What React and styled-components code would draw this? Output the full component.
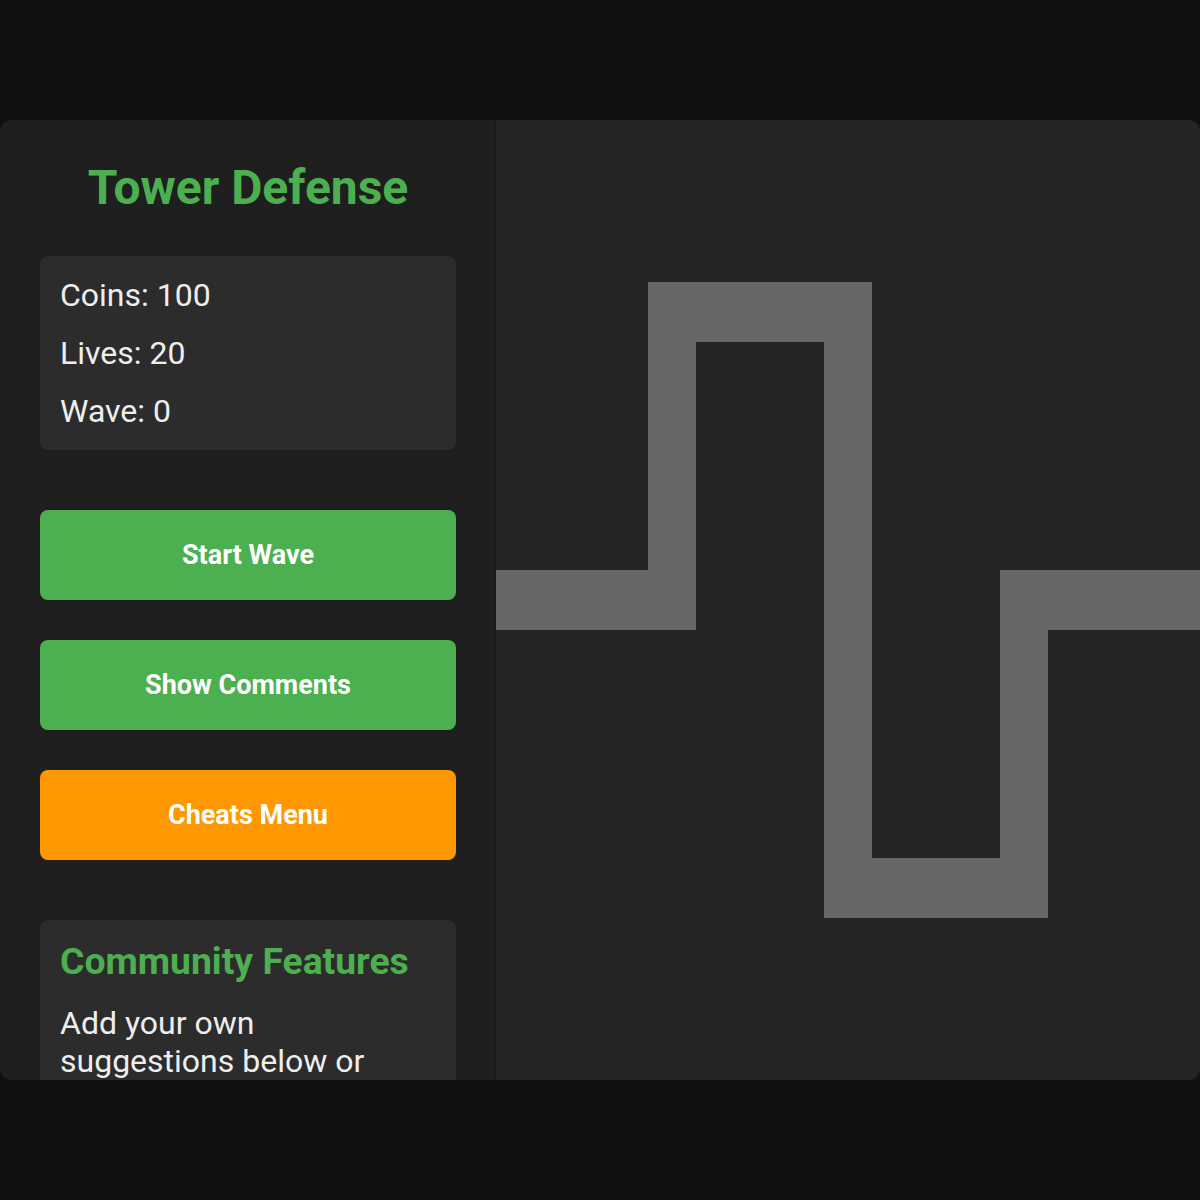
import React, { useState } from "react";
import styled, { createGlobalStyle } from "styled-components";

const GlobalStyle = createGlobalStyle`
  html, body {
    margin: 0;
    padding: 0;
    background: #111111;
    font-family: Roboto, "Noto Sans", "Liberation Sans", sans-serif;
  }
  * {
    box-sizing: border-box;
  }
`;

// enemy route, in board pixels: each segment is a rect [x, y, w, h]
const PATH_SEGMENTS = [
  [0, 450, 200, 60],
  [152, 162, 48, 348],
  [152, 162, 224, 60],
  [328, 162, 48, 636],
  [328, 738, 224, 60],
  [504, 450, 48, 348],
  [504, 450, 200, 60],
];

const App = () => {
  const [stats] = useState({ coins: 100, lives: 20, wave: 0 });

  return (
    <>
      <GlobalStyle />
      <Page>
        <Game>
          <Sidebar>
            <Title>Tower Defense</Title>
            <StatsBox>
              <Stat>Coins: {stats.coins}</Stat>
              <Stat>Lives: {stats.lives}</Stat>
              <Stat>Wave: {stats.wave}</Stat>
            </StatsBox>
            <Controls>
              <ActionButton>Start Wave</ActionButton>
              <ActionButton>Show Comments</ActionButton>
              <ActionButton $variant="warning">Cheats Menu</ActionButton>
            </Controls>
            <Community>
              <CommunityTitle>Community Features</CommunityTitle>
              <CommunityText>
                Add your own suggestions below or comment on what you'd like
                to see next!
              </CommunityText>
            </Community>
          </Sidebar>
          <Board>
            <svg width="704" height="960" viewBox="0 0 704 960">
              {PATH_SEGMENTS.map(([x, y, w, h], i) => (
                <rect key={i} x={x} y={y} width={w} height={h} fill="#666666" />
              ))}
            </svg>
          </Board>
        </Game>
      </Page>
    </>
  );
};

const Page = styled.div`
  height: 100vh;
  display: flex;
  align-items: center;
  justify-content: center;
`;

const Game = styled.div`
  width: 100%;
  height: 80vh;
  display: flex;
  border-radius: 12px;
  overflow: hidden;
  background: #242424;
`;

const Sidebar = styled.div`
  width: 496px;
  flex-shrink: 0;
  padding: 40px;
  background: #1f1f1f;
  box-shadow: inset -3px 0 3px -2px rgba(0, 0, 0, 0.2);
  overflow: hidden;
`;

const Title = styled.h1`
  margin: 0;
  font-size: 48px;
  line-height: 56px;
  font-weight: 700;
  color: #4caf50;
  text-align: center;
`;

const StatsBox = styled.div`
  margin-top: 40px;
  padding: 20px;
  background: #2c2c2c;
  border-radius: 8px;
  display: flex;
  flex-direction: column;
  gap: 20px;
`;

const Stat = styled.p`
  margin: 0;
  font-size: 32px;
  line-height: 38px;
  color: #eeeeee;
`;

const Controls = styled.div`
  margin-top: 60px;
  display: flex;
  flex-direction: column;
  gap: 40px;
`;

const ActionButton = styled.button`
  height: 90px;
  width: 100%;
  border: none;
  border-radius: 8px;
  background: ${(p) => (p.$variant === "warning" ? "#ff9800" : "#4caf50")};
  color: #ffffff;
  font-family: inherit;
  font-size: 27px;
  font-weight: 700;
  cursor: pointer;
`;

const Community = styled.div`
  margin-top: 60px;
  padding: 20px;
  background: #2c2c2c;
  border-radius: 8px;
`;

const CommunityTitle = styled.h2`
  margin: 0;
  font-size: 37.3px;
  line-height: 42px;
  font-weight: 700;
  color: #4caf50;
`;

const CommunityText = styled.p`
  margin: 22px 0 0;
  font-size: 32px;
  line-height: 38px;
  color: #eeeeee;
`;

const Board = styled.div`
  flex: 1;
  background: #242424;
  overflow: hidden;

  svg {
    display: block;
  }
`;

export default App;
